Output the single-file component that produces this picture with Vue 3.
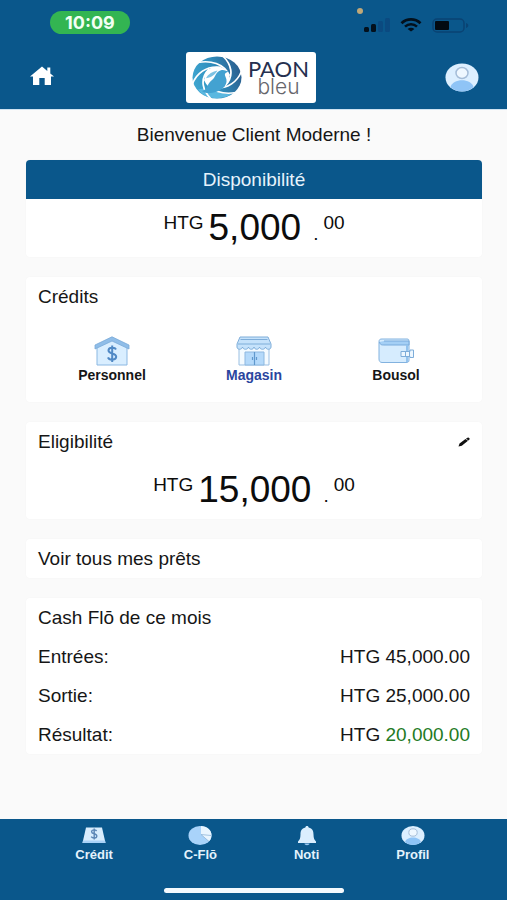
<script setup>
const credits = [
  { id: 'personnel', label: 'Personnel' },
  { id: 'magasin', label: 'Magasin', active: true },
  { id: 'bousol', label: 'Bousol' },
]

const cashFlow = [
  { label: 'Entrées:', value: '45,000.00' },
  { label: 'Sortie:', value: '25,000.00' },
  { label: 'Résultat:', value: '20,000.00', positive: true },
]

const tabs = [
  { id: 'credit', label: 'Crédit' },
  { id: 'flo', label: 'C-Flō' },
  { id: 'noti', label: 'Noti' },
  { id: 'profil', label: 'Profil' },
]

const bladeAngles = [0, 60, 120, 180, 240, 300]
</script>

<template>
  <div class="screen">
    <header class="top">
      <div class="status">
        <span class="clock">10:09</span>
        <div class="signals">
          <i class="mic-dot"></i>
          <svg class="cell" viewBox="0 0 26 14" aria-hidden="true">
            <rect x="0" y="9" width="5" height="5" rx="1.5" fill="#03101c" />
            <rect x="7" y="6" width="5" height="8" rx="1.5" fill="#03101c" />
            <rect x="14" y="3" width="5" height="11" rx="1.5" fill="#0b4a80" />
            <rect x="21" y="0" width="5" height="14" rx="1.5" fill="#0b4a80" />
          </svg>
          <svg class="wifi" viewBox="0 0 22 14" aria-hidden="true">
            <path d="M1.5 5.2C7 .2 15 .2 20.5 5.2" fill="none" stroke="#03101c" stroke-width="2.8" />
            <path d="M5 8.600C8.500 5.500 13.500 5.500 17 8.600" fill="none" stroke="#03101c" stroke-width="2.6" />
            <path d="M11 13.500L7.600 10.900C9.500 9.300 12.500 9.300 14.400 10.900Z" fill="#03101c" />
          </svg>
          <svg class="battery" viewBox="0 0 37 15" aria-hidden="true">
            <rect x="1" y="1" width="31" height="13" rx="4" fill="none" stroke="#0a4373" stroke-width="1.5" />
            <rect x="3" y="3" width="14" height="9" rx="1" fill="#020a12" />
            <path d="M34 5c3 1 3 4 0 5z" fill="#0a4373" />
          </svg>
        </div>
      </div>
      <div class="bar">
        <a class="home" href="#accueil" aria-label="Accueil">
          <svg viewBox="0 0 24 20" aria-hidden="true">
            <path d="M12 .5L0 10.500H3V19H9.300V12H14.700V19H21V10.500H24L20.300 7.400V1.500H17.300V5Z" fill="#fff" />
          </svg>
        </a>
        <div class="brand">
          <svg class="swirl" viewBox="-50 -50 100 100" preserveAspectRatio="none" aria-hidden="true">
            <defs>
              <linearGradient id="swirl-fill" x1="0" y1="0.6" x2="1" y2="0.3">
                <stop offset="0" stop-color="#3fa6d0" />
                <stop offset="0.45" stop-color="#2f8fbe" />
                <stop offset="1" stop-color="#2a5c8c" />
              </linearGradient>
            </defs>
            <circle r="49" fill="url(#swirl-fill)" />
            <path d="M-38 28C-20 20 10 42 30 38C14 52 -22 54 -38 28Z" fill="#5ab8e0" />
            <circle r="25" fill="#fff" />
            <path
              v-for="angle in bladeAngles"
              :key="angle"
              :transform="`rotate(${angle})`"
              d="M-38 -35C-14 -40 14 -34 25 -4"
              fill="none"
              stroke="#fff"
              stroke-width="3.5"
            />
            <path d="M-30 32C-18 28 -20 14 -10 6C-3 0 -3 -14 8 -17C14 -19 18 -15 25 -14C17 -12 14 -9 17 -2C24 14 13 27 -1 33C-11 37 -22 38 -30 32Z" fill="#43a2d1" />
            <path d="M-22 2C-18 -8 -8 -14 1 -16C-4 -7 -10 0 -22 2Z" fill="#7dc2e3" />
          </svg>
          <div class="wordmark">
            <span class="paon">PAON</span>
            <span class="bleu">bleu</span>
          </div>
        </div>
        <a class="avatar" href="#profil" aria-label="Mon profil">
          <svg viewBox="0 0 34 29" aria-hidden="true">
            <ellipse cx="17" cy="14.500" rx="16.5" ry="14" fill="#dcefff" />
            <path d="M5.500 24.300C7.500 15 26.500 15 28.500 24.300C22 30 12 30 5.500 24.300Z" fill="#8fc4f6" />
            <ellipse cx="17" cy="10" rx="6" ry="5.5" fill="#eff8ff" stroke="#a5bdd8" stroke-width="1.5" />
          </svg>
        </a>
      </div>
    </header>

    <main class="content">
      <h1 class="welcome">Bienvenue Client Moderne !</h1>

      <section class="card">
        <h2 class="card-head">Disponibilité</h2>
        <p class="amount">
          <span class="minor">HTG</span>
          <span class="major"><span class="big">5,000</span><span class="dot">.</span></span>
          <span class="minor">00</span>
        </p>
      </section>

      <section class="card">
        <h2 class="title">Crédits</h2>
        <div class="credits">
          <button v-for="c in credits" :key="c.id" type="button" class="credit" :class="{ active: c.active }">
            <svg v-if="c.id === 'personnel'" viewBox="0 0 36 30" aria-hidden="true">
              <path d="M3 9L18 2L33 9V29H3Z" fill="#d9eeff" stroke="#8bb8e2" />
              <path d="M1 9L18 .8L35 9V13L18 5L1 13Z" fill="#8fbde8" stroke="#78a9d8" stroke-width=".8" />
              <path d="M22 13.500C21 11.200 14.500 11 14.500 14.500C14.500 18.500 22.200 16.500 22.200 20.800C22.200 24.500 15 24.500 14 21.400M18.200 9.500V26" fill="none" stroke="#5089c5" stroke-width="2" />
            </svg>
            <svg v-else-if="c.id === 'magasin'" viewBox="0 0 36 30" aria-hidden="true">
              <path d="M3 11H33V29H3Z" fill="#f3faff" stroke="#9abfe2" />
              <path d="M4 1H32L35 8V11C35 14 30 14 29.500 11C29 14 24 14 23.500 11C23 14 18.500 14 18 11C17.500 14 13 14 12.500 11C12 14 7 14 6.500 11C6 14 1 14 1 11V8Z" fill="#c5e2fb" stroke="#7eadd9" />
              <path d="M2 8H34M4.500 3.500H31.500" stroke="#7eadd9" stroke-width="1.2" />
              <path d="M9 16H28V29H9Z" fill="#b4d9fa" stroke="#8db8e0" />
              <path d="M18.500 16V29M16.500 21V24M20.500 21V24" stroke="#5f98cd" stroke-width="1.2" />
            </svg>
            <svg v-else viewBox="0 0 36 30" aria-hidden="true">
              <path d="M1 6C1 3.500 2 3 4 3H29C31 3 31 4 31 6V24C31 26 30 26.500 28 26.500H4C2 26.500 1 25 1 23Z" fill="#d6ecfe" stroke="#82b2df" />
              <path d="M1.500 6C2 9 4 9 6 9H31V5H6" fill="#a4cff5" stroke="#78aadb" />
              <path d="M29 9V26" stroke="#93c3ee" stroke-width="2" />
              <path d="M23 15.500H32V14H35.500V21.500H32V20.500H23Z" fill="#edf7ff" stroke="#7eadd9" />
              <path d="M27.500 15.500V20.500M31.500 14.500V21" stroke="#7eadd9" />
            </svg>
            <span>{{ c.label }}</span>
          </button>
        </div>
      </section>

      <section class="card">
        <div class="title-row">
          <h2 class="title">Eligibilité</h2>
          <button type="button" class="edit" aria-label="Modifier">
            <svg viewBox="0 0 12 10" aria-hidden="true">
              <path d="M.5 9.500L1.500 6.500L7.500 2L10 3.800L3.800 8.800ZM8 1.600L9.500 .7Q10.500 .2 11.500 1.300Q12 2.300 11 3L10.300 3.500Z" fill="#111" />
            </svg>
          </button>
        </div>
        <p class="amount">
          <span class="minor">HTG</span>
          <span class="major"><span class="big">15,000</span><span class="dot">.</span></span>
          <span class="minor">00</span>
        </p>
      </section>

      <a class="card loans" href="#prets">Voir tous mes prêts</a>

      <section class="card">
        <h2 class="title">Cash Flō de ce mois</h2>
        <dl class="flow">
          <div v-for="row in cashFlow" :key="row.label" class="flow-row">
            <dt>{{ row.label }}</dt>
            <dd>HTG <span :class="{ positive: row.positive }">{{ row.value }}</span></dd>
          </div>
        </dl>
      </section>
    </main>

    <footer class="bottom">
      <nav class="tabs">
        <a v-for="t in tabs" :key="t.id" class="tab" :href="`#${t.id}`">
          <svg v-if="t.id === 'credit'" viewBox="0 0 24 20" aria-hidden="true">
            <path d="M4 1.500H20L23.500 17H.5Z" fill="#d9edfd" />
            <path d="M1 14.500H23L23.500 17H.5Z" fill="#a9d2f7" />
            <path d="M14.600 5C13.500 3.300 9.600 3.500 9.600 5.700C9.600 8.500 14.800 7 14.800 10C14.800 12.500 10.500 12.500 9.200 10.700M12.200 2.500V13.500" fill="none" stroke="#5c86b5" stroke-width="1.4" />
          </svg>
          <svg v-else-if="t.id === 'flo'" viewBox="0 0 24 20" aria-hidden="true">
            <ellipse cx="12" cy="9.5" rx="11.5" ry="9.5" fill="#a9d3fa" />
            <path d="M13 8.500V0C19 .2 23.500 4 23.500 9C23.500 11.500 22.500 13.500 21 15.300Z" fill="#e9f5ff" />
            <path d="M13 8.500L23 9.500M13 8.500L21 15.500" stroke="#8fb5d9" stroke-width=".8" />
          </svg>
          <svg v-else-if="t.id === 'noti'" viewBox="0 0 24 20" aria-hidden="true">
            <path d="M12 0C13 0 13.600 .7 13.600 1.500C17.500 2.300 18.500 5 18.500 8.500C18.500 12.500 19.500 14 21 15.500V17H3V15.500C4.500 14 5.500 12.500 5.500 8.500C5.500 5 6.500 2.300 10.400 1.500C10.400 .7 11 0 12 0Z" fill="#dbeefe" />
            <path d="M9.500 17.500H14.500C14.500 19.700 9.500 19.700 9.500 17.500Z" fill="#9ccaf5" />
          </svg>
          <svg v-else viewBox="0 0 24 20" aria-hidden="true">
            <ellipse cx="12" cy="9.5" rx="11.5" ry="9.5" fill="#dcefff" />
            <path d="M4 16C5.500 10 18.500 10 20 16C15.500 20 8.500 20 4 16Z" fill="#8fc4f6" />
            <ellipse cx="12" cy="6.5" rx="4.2" ry="3.7" fill="#eff8ff" stroke="#a5bdd8" />
          </svg>
          <span>{{ t.label }}</span>
        </a>
      </nav>
      <div class="indicator"></div>
    </footer>
  </div>
</template>

<style>
body {
  margin: 0;
  background: #fafafa;
}
</style>

<style scoped>
.screen {
  display: flex;
  flex-direction: column;
  min-height: 100vh;
  font-family: "Liberation Sans", Arial, sans-serif;
  font-size: 19px;
  color: #161616;
  background: #fafafa;
}

h1, h2, p, dl, dd {
  margin: 0;
  font-size: 19px;
  font-weight: 400;
}

button {
  padding: 0;
  border: 0;
  background: none;
  font-family: inherit;
  color: inherit;
  cursor: pointer;
}

a {
  color: inherit;
  text-decoration: none;
}

svg {
  display: block;
}

.top {
  background: #0a578b;
  border-bottom: 1px solid #cfe3f2;
}

.status {
  display: flex;
  justify-content: space-between;
  align-items: center;
  padding: 11px 38px 0 50px;
}

.clock {
  padding: 0 15px;
  border-radius: 12px;
  background: #33b552;
  color: #f2fff4;
  font-family: Inter, sans-serif;
  font-size: 18px;
  font-weight: 700;
  line-height: 23px;
}

.signals {
  position: relative;
  display: flex;
  align-items: center;
  gap: 10px;
  padding-top: 5px;
}

.mic-dot {
  position: absolute;
  top: -5px;
  left: -7px;
  width: 6px;
  height: 6px;
  border-radius: 50%;
  background: #c0a878;
}

.cell {
  width: 26px;
  height: 14px;
}

.wifi {
  width: 22px;
  height: 14px;
}

.battery {
  width: 37px;
  height: 15px;
}

.bar {
  display: grid;
  grid-template-columns: 1fr auto 1fr;
  align-items: center;
  padding: 18px 28px 6px 22px;
}

.home {
  width: 24px;
  padding: 0 8px 4px;
}

.home svg {
  width: 24px;
  height: 20px;
}

.brand {
  display: flex;
  align-items: center;
  gap: 4px;
  padding: 4px 4px 4px 6px;
  border-radius: 3px;
  background: #fff;
}

.swirl {
  width: 50px;
  height: 43px;
}

.wordmark {
  display: flex;
  flex-direction: column;
  align-items: center;
  gap: 2px;
  width: 66px;
}

.paon {
  color: #25304f;
  font-family: Lato, sans-serif;
  font-size: 22px;
  line-height: 16px;
}

.bleu {
  color: #66666c;
  font-family: Inter, sans-serif;
  font-size: 21px;
  font-weight: 300;
  line-height: 16px;
}

.avatar {
  justify-self: end;
}

.avatar svg {
  width: 34px;
  height: 29px;
}

.content {
  display: flex;
  flex: 1;
  flex-direction: column;
  gap: 20px;
  padding: 14px 25px 20px 26px;
}

.welcome {
  margin-bottom: -6px;
  line-height: 22px;
  text-align: center;
}

.card {
  overflow: hidden;
  border-radius: 4px;
  background: #fff;
  box-shadow: 0 0 2px rgba(0, 0, 0, 0.03);
}

.card-head {
  background: #0a578b;
  color: #e6f3fc;
  line-height: 39px;
  text-align: center;
}

.title {
  padding: 0 12px;
  line-height: 39px;
}

.title-row {
  display: flex;
  justify-content: space-between;
  align-items: center;
}

.edit {
  padding: 8px 12px;
}

.edit svg {
  width: 12px;
  height: 10px;
}

.amount {
  display: flex;
  justify-content: center;
  gap: 5px;
  padding: 11px 0;
  color: #0c0c0c;
}

.minor {
  line-height: 26px;
}

.major {
  display: flex;
  align-items: baseline;
  gap: 12px;
}

.big {
  font-size: 37px;
  line-height: 36px;
}

.dot {
  line-height: 18px;
}

.credits {
  display: grid;
  grid-template-columns: repeat(3, 1fr);
  padding: 20px 15px 18px;
}

.credit {
  display: flex;
  flex-direction: column;
  align-items: center;
  font-size: 14px;
  font-weight: 700;
  line-height: 18px;
}

.credit svg {
  width: 36px;
  height: 30px;
}

.credit.active {
  color: #2a459e;
}

.loans {
  padding: 0 12px;
  line-height: 39px;
}

.flow-row {
  display: flex;
  justify-content: space-between;
  padding: 0 12px;
  line-height: 39px;
}

.positive {
  color: #237a24;
}

.bottom {
  padding: 7px 41px;
  background: #0a578b;
}

.tabs {
  display: grid;
  grid-template-columns: repeat(4, 1fr);
}

.tab {
  display: flex;
  flex-direction: column;
  align-items: center;
  color: #e4f2fc;
  font-size: 13px;
  font-weight: 700;
  line-height: 18px;
}

.tab svg {
  width: 24px;
  height: 20px;
}

.indicator {
  width: 180px;
  height: 5px;
  margin: 24px auto 0;
  border-radius: 3px;
  background: #f4f9fd;
}
</style>
